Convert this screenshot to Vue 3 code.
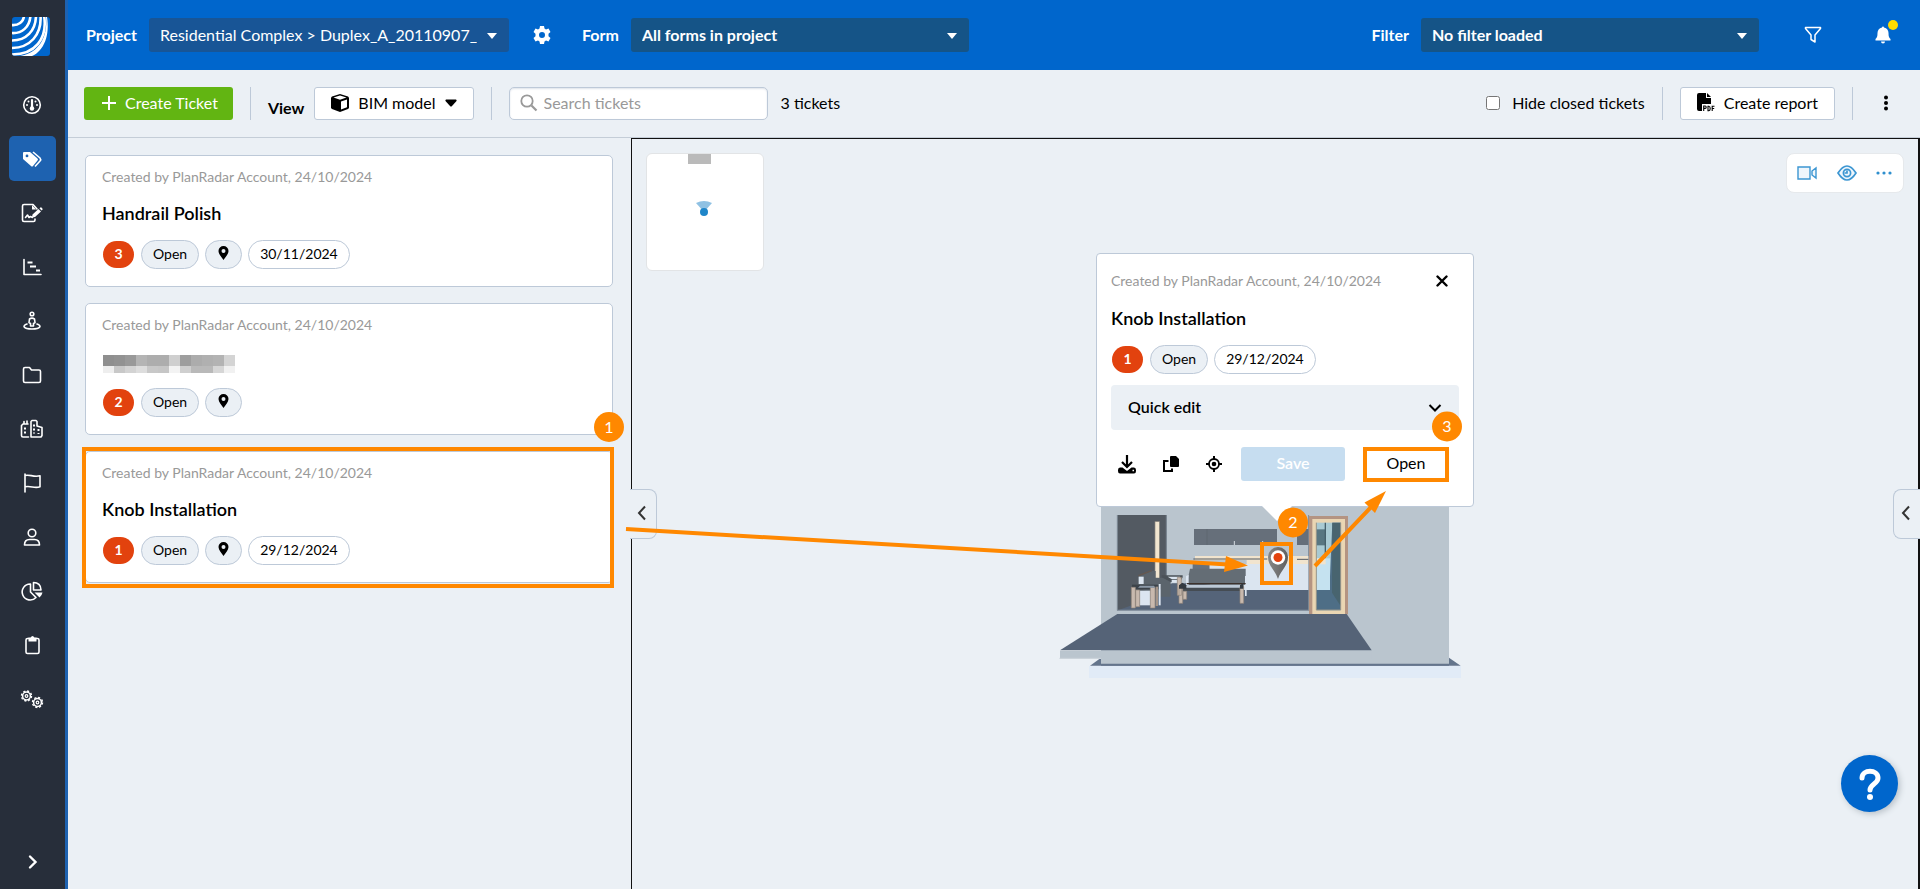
<template>
  <div class="app">
    <aside class="sidebar">
      <a class="logo" href="#" aria-label="PlanRadar">
        <svg width="38" height="39" viewBox="0 0 38 39">
          <defs><clipPath id="logoClip"><rect width="38" height="39" rx="3" /></clipPath></defs>
          <g clip-path="url(#logoClip)">
            <rect width="38" height="39" fill="#0066cc" />
            <g fill="none" stroke="#fff" stroke-width="2.6">
              <path d="M-1 8C6 9 12 5 12-2" />
              <path d="M-1 16C10 17 18 10 18.500-2" />
              <path d="M-1 23.500C14 24 24 14 24-2" />
              <path d="M-1 31C18 31 30 18 28.500-2" />
              <path d="M-1 37.500C23 38 36 22 32-2" />
            </g>
            <path d="M8 39C27 36 36 20 34 0L35 0C38 18 32 34 20 39Z" fill="#fff" />
          </g>
        </svg>
      </a>
      <nav class="menu">
        <a v-for="item in menu" :key="item.name" href="#" class="menu-item" :class="{ active: item.active }" :aria-label="item.name">
          <svg width="24" height="24" viewBox="0 0 24 24" v-html="item.icon"></svg>
        </a>
      </nav>
      <button class="expand" aria-label="Expand menu">
        <svg width="12" height="16" viewBox="0 0 12 16"><path d="M3 2.500L8.500 8L3 13.500" fill="none" stroke="#fff" stroke-width="2.400" stroke-linecap="round" /></svg>
      </button>
    </aside>

    <div class="main">
      <header class="topbar">
        <label class="top-label" for="project">Project</label>
        <div class="select project">
          <select id="project"><option>Residential Complex &gt; Duplex_A_20110907_</option></select>
          <svg class="caret" width="12" height="8" viewBox="0 0 12 8"><path d="M1 1h10L6 7z" fill="#fff" /></svg>
        </div>
        <button class="icon-btn gear" aria-label="Project settings">
          <svg width="20" height="20" viewBox="0 0 20 20">
            <path fill="#fff" fill-rule="evenodd" d="M8 1h4l.5 2.600 1.500.900 2.500-.900 2 3.400-2 1.800v2.400l2 1.800-2 3.400-2.500-.900-1.500.900L12 19H8l-.5-2.600-1.500-.900-2.500.900-2-3.400 2-1.800V8.800l-2-1.800 2-3.400 2.500.900 1.500-.900zM10 7a3 3 0 1 0 0 6 3 3 0 0 0 0-6z" />
          </svg>
        </button>
        <label class="top-label" for="form">Form</label>
        <div class="select form">
          <select id="form"><option>All forms in project</option></select>
          <svg class="caret" width="12" height="8" viewBox="0 0 12 8"><path d="M1 1h10L6 7z" fill="#fff" /></svg>
        </div>
        <label class="top-label filter-label" for="filter">Filter</label>
        <div class="select form">
          <select id="filter"><option>No filter loaded</option></select>
          <svg class="caret" width="12" height="8" viewBox="0 0 12 8"><path d="M1 1h10L6 7z" fill="#fff" /></svg>
        </div>
        <button class="icon-btn funnel" aria-label="Filter">
          <svg width="18" height="18" viewBox="0 0 18 18"><path d="M1.500 1.500h15v1L11 9v7l-4-2.500V9L1.500 2.500z" fill="none" stroke="#fff" stroke-width="1.500" stroke-linejoin="round" /></svg>
        </button>
        <button class="icon-btn bell" aria-label="Notifications">
          <svg width="16" height="18" viewBox="0 0 16 18">
            <path fill="#fff" d="M7 1.500a1 1 0 0 1 2 0c3 .5 4.500 3 4.500 5.500 0 3.500.5 4.500 2 6v1.500H.5V13c1.500-1.500 2-2.500 2-6C2.500 4.500 4 2 7 1.500zM6 15.500h4a2 2 0 0 1-4 0z" />
          </svg>
          <span class="dot"></span>
        </button>
      </header>

      <div class="toolbar">
        <button class="create">
          <svg width="14" height="14" viewBox="0 0 14 14"><path d="M7 0v14M0 7h14" stroke="#fff" stroke-width="2" /></svg>
          Create Ticket
        </button>
        <span class="divider"></span>
        <span class="view-label">View</span>
        <button class="btn bim">
          <svg width="18" height="18" viewBox="0 0 18 18">
            <path d="M9 0l8 2.500 1 1V14l-1 1-8 3-8-3-1-1V3.500l1-1z" fill="#000" />
            <path d="M2.500 3.500L9 5.700l6.500-2.200L9 1.600zM10 7.500l6-2v7.800l-6 2.300z" fill="#fff" />
          </svg>
          BIM model
          <svg width="12" height="8" viewBox="0 0 12 8"><path d="M1 .5h10q1 .5.5 1.500L7 7q-1 1-2 0L.5 2Q0 1 1 .5z" fill="#000" /></svg>
        </button>
        <span class="divider"></span>
        <div class="search">
          <svg width="18" height="18" viewBox="0 0 18 18"><circle cx="7" cy="7" r="5.700" fill="none" stroke="#999" stroke-width="1.800" /><path d="M11.500 11.500L16.500 16.500" stroke="#999" stroke-width="2.200" /></svg>
          <input v-model="query" type="text" placeholder="Search tickets" aria-label="Search tickets" />
        </div>
        <span class="count">3 tickets</span>
        <label class="hide-closed"><input v-model="hideClosed" type="checkbox" /><span>Hide closed tickets</span></label>
        <span class="divider"></span>
        <button class="btn report">
          <svg width="18" height="19" viewBox="0 0 18 19">
            <path d="M2 0h7v5h5v6H5v7H2q-2 0-2-2V2q0-2 2-2zM10 0l4 4h-4z" fill="#000" />
            <path d="M6.700 18v-5h1.500q1 0 1 1.200t-1 1.200H6.700M11 13.200v4.600h.8q1.400-.3 1.400-2.300t-1.400-2.300zM15.200 18v-4.800h2.300M15.200 15.500h2" fill="none" stroke="#000" stroke-width="1.100" />
          </svg>
          Create report
        </button>
        <span class="divider"></span>
        <button class="icon-btn more" aria-label="More">
          <svg width="6" height="16" viewBox="0 0 6 16"><circle cx="3" cy="2.500" r="2" /><circle cx="3" cy="8" r="2" /><circle cx="3" cy="13.500" r="2" /></svg>
        </button>
      </div>

      <div class="content">
        <section class="list">
          <article v-for="t in tickets" :key="t.id" class="card">
            <p class="meta">Created by PlanRadar Account, 24/10/2024</p>
            <h3 v-if="t.title" class="title">{{ t.title }}</h3>
            <div v-else class="title redacted">
              <svg width="132" height="18" viewBox="0 0 132 18" shape-rendering="crispEdges">
                <rect v-for="(c, i) in mosaicTop" :key="'t' + i" :x="i * 11" y="0" width="11" height="11" :fill="c" />
                <rect v-for="(c, i) in mosaicBottom" :key="'b' + i" :x="i * 11" y="11" width="11" height="7" :fill="c" />
              </svg>
            </div>
            <div class="chips">
              <span class="number">{{ t.id }}</span>
              <span class="chip grey">Open</span>
              <span class="chip grey pin">
                <svg width="11" height="14" viewBox="0 0 11 14"><path fill-rule="evenodd" d="M5.500 0A5 5 0 0 1 10.500 5c0 3-3 6-5 9-2-3-5-6-5-9a5 5 0 0 1 5-5zm0 3a2 2 0 1 0 0 4 2 2 0 0 0 0-4z" /></svg>
              </span>
              <span v-if="t.date" class="chip">{{ t.date }}</span>
            </div>
            <template v-if="t.marked">
              <span class="mark"></span>
              <span class="step">1</span>
            </template>
          </article>
        </section>

        <section class="viewer">
          <button class="tab tab-left" aria-label="Collapse list">
            <svg width="10" height="16" viewBox="0 0 10 16"><path d="M8 1.500L2 8l6 6.500" fill="none" stroke="#333" stroke-width="2" /></svg>
          </button>
          <button class="tab tab-right" aria-label="Open panel">
            <svg width="10" height="16" viewBox="0 0 10 16"><path d="M8 1.500L2 8l6 6.500" fill="none" stroke="#333" stroke-width="2" /></svg>
          </button>

          <div class="minimap">
            <svg width="116" height="116" viewBox="0 0 116 116">
              <rect x="41" y="0" width="23" height="10" fill="#bababa" />
              <path d="M49 49q8-4 16 0l-8 9z" fill="#8fc1e3" />
              <circle cx="57" cy="58" r="4" fill="#1f86c9" />
            </svg>
          </div>

          <div class="viewer-tools">
            <button class="icon-btn" aria-label="Camera">
              <svg width="20" height="14" viewBox="0 0 20 14" fill="#eff6fc" stroke="#3c96d2" stroke-width="1.400"><path d="M1 1h12v12H1zM15 5l4-3v10l-4-3z" /></svg>
            </button>
            <button class="icon-btn" aria-label="Visibility">
              <svg width="20" height="16" viewBox="0 0 20 16" fill="none" stroke="#3c96d2" stroke-width="1.700"><path d="M1 8Q10-6 19 8 10 22 1 8z" fill="#eff6fc" /><circle cx="10" cy="8" r="3.600" /><path d="M10 5.500V8H7.500" /></svg>
            </button>
            <button class="icon-btn" aria-label="More tools">
              <svg width="16" height="4" viewBox="0 0 16 4" fill="#2f8fce"><circle cx="2" cy="2" r="1.600" /><circle cx="8" cy="2" r="1.600" /><circle cx="14" cy="2" r="1.600" /></svg>
            </button>
          </div>

          <div class="scene">
            <article class="popup">
              <div class="popup-head">
                <p class="meta">Created by PlanRadar Account, 24/10/2024</p>
                <button class="icon-btn" aria-label="Close">
                  <svg width="12" height="12" viewBox="0 0 12 12"><path d="M1.500 1.500l9 9M10.500 1.500l-9 9" stroke="#000" stroke-width="2.400" stroke-linecap="round" /></svg>
                </button>
              </div>
              <h3 class="title">Knob Installation</h3>
              <div class="chips">
                <span class="number">1</span>
                <span class="chip grey">Open</span>
                <span class="chip">29/12/2024</span>
              </div>
              <button class="quick">
                <span>Quick edit</span>
                <svg width="14" height="10" viewBox="0 0 14 10"><path d="M1.500 2L7 7.500 12.500 2" fill="none" stroke="#000" stroke-width="2" /></svg>
              </button>
              <div class="actions">
                <button class="icon-btn" aria-label="Download">
                  <svg width="18" height="19" viewBox="0 0 18 19">
                    <path d="M9 0v11M4 7l5 5 5-5" fill="none" stroke="#000" stroke-width="2.200" />
                    <path fill-rule="evenodd" d="M2 12.500h2.500L9 16l4.500-3.500H16q2 0 2 2.500v1q0 2.500-2 2.500H2q-2 0-2-2.500v-1q0-2.500 2-2.500zm12.500 2.300v1.500H16v-1.500z" />
                  </svg>
                </button>
                <button class="icon-btn" aria-label="Copy">
                  <svg width="16" height="16" viewBox="0 0 16 16"><path d="M8 0h5l3 3v7q0 1-1 1H8q-1 0-1-1V1q0-1 1-1z" /><path d="M5.500 5H1v10h8v-2.500" fill="none" stroke="#000" stroke-width="2" /></svg>
                </button>
                <button class="icon-btn" aria-label="Locate">
                  <svg width="16" height="16" viewBox="0 0 16 16"><circle cx="8" cy="8" r="5" fill="none" stroke="#000" stroke-width="1.800" /><circle cx="8" cy="8" r="2.300" /><path d="M8 0v3M8 13v3M0 8h3M13 8h3" stroke="#000" stroke-width="2" /></svg>
                </button>
                <button class="save" disabled>Save</button>
                <button class="open">Open</button>
              </div>
            </article>

            <svg class="building" width="460" height="200" viewBox="0 0 1380 600">
              <path d="M150 527l33-24h1044l35 24z" fill="#64758c" />
              <rect x="147" y="528" width="1116" height="36" fill="#e1ebf7" />
              <rect x="183" y="30" width="1044" height="492" fill="#bac5ce" />
              <!-- room interior -->
              <rect x="232" y="75" width="148" height="287" fill="#535a62" />
              <path d="M379 75v190M232 75v286" stroke="#7c8894" stroke-width="3" />
              <rect x="345" y="95" width="13" height="170" fill="#f2e6d0" stroke="#8f8a80" stroke-width="2" />
              <path d="M236 360l35-13 125-67h80l140 20h190v61z" fill="#556479" />
              <rect x="462" y="117" width="249" height="48" fill="#666f7a" />
              <path d="M501 117v48" stroke="#5b646e" stroke-width="2" />
              <path d="M583 153v12M668 153v12" stroke="#d6dde3" stroke-width="3" />
              <rect x="771" y="117" width="36" height="48" fill="#666f7a" />
              <path d="M806 75v286" stroke="#7c8894" stroke-width="3" />
              <path d="M465 198h340v24H620v-12H465z" fill="#f1e4ce" />
              <path d="M460 207h222M771 208h34" stroke="#535a62" stroke-width="3" />
              <rect x="510" y="222" width="295" height="78" fill="#dbe5f0" />
              <rect x="458" y="222" width="50" height="18" fill="#67717c" />
              <!-- armchair -->
              <path d="M295 260l40-17h12v20l45 1v56h-45l-52-30z" fill="#5b646c" />
              <path d="M296 260h15v22h-15z" fill="#dbe5f0" />
              <path d="M295 257l40-15" stroke="#665950" stroke-width="4" />
              <path d="M365 256h63v6l-8 14h-28l-27-14z" fill="#4b5259" />
              <path d="M383 260h37v8h-24zM395 270h18v8h-18z" fill="#dbe5f0" />
              <path d="M276 284h86v14h-86z" fill="#3c434a" />
              <path d="M298 302h34v44h-34z" fill="#dbe5f0" />
              <path d="M274 292h12v62h-12zM287 300h12v50h-12zM331 292h14v62h-14z" fill="#c8b9ae" stroke="#93857a" stroke-width="2" />
              <path d="M347 290h7v58h-7z" fill="#a39488" />
              <path d="M356 282h6v64h-6z" fill="#dbe5f0" />
              <path d="M300 287h42l4 6h-52z" fill="#8b99a8" />
              <!-- sofa -->
              <path d="M450 236h167v48H440z" fill="#646d75" />
              <path d="M438 258l8-3v30h-8zM615 258h5v60h-5z" fill="#dbe5f0" />
              <path d="M440 281h177" stroke="#3c322d" stroke-width="4" />
              <path d="M425 285h185v18H425z" fill="#454c53" />
              <path d="M440 285h167v8H435z" fill="#bcc9d6" />
              <path d="M412 262h12v54h-12zM417 290h11v50h-11zM429 304h11v24h-11zM600 290h11v50h-11z" fill="#c8b9ae" stroke="#93857a" stroke-width="2" />
              <path d="M417 286l10-8 12 8v10h-22zM600 286l10-8v18h-10z" fill="#343a41" />
              <path d="M232 361h575" stroke="#8793a1" stroke-width="4" />
              <!-- door -->
              <rect x="807" y="78" width="117" height="295" fill="#b49482" />
              <path d="M817 87h98v285h-98z" fill="#ead6b3" />
              <rect x="829" y="98" width="73" height="263" fill="#a9cad3" />
              <path d="M829 118h28v48h-28z" fill="#587681" />
              <path d="M856 98v108" stroke="#46616c" stroke-width="4" />
              <path d="M829 205h42v95h-42z" fill="#c5e2f0" />
              <path d="M829 205h28v18h-28z" fill="#f1e4ce" />
              <path d="M829 300h41v-40l7-162h25v262h-73z" fill="#4e6e86" />
              <path d="M877 98h25v250l-26-40z" fill="#48646f" />
              <path d="M829 98v262h73V98" fill="none" stroke="#97958a" stroke-width="3" />
              <!-- terrace -->
              <path d="M60 483h935v24H183v0H60z" fill="#bac5ce" />
              <path d="M58 505h125" stroke="#cfd7dd" stroke-width="3" />
              <path d="M232 372h688l75 109H60z" fill="#556377" />
              <path d="M183 524h1044" stroke="#64758c" stroke-width="6" />
            </svg>

            <svg class="guides" width="470" height="440" viewBox="1040 253 470 440">
              <defs>
                <linearGradient id="pinFill" x1="0" x2="1">
                  <stop offset="0" stop-color="#868686" />
                  <stop offset="1" stop-color="#5f5f5f" />
                </linearGradient>
              </defs>
              <path d="M1278 579c-3-9-10-13-10-22a10 10 0 0 1 20 0c0 9-7 13-10 22z" fill="url(#pinFill)" />
              <circle cx="1278" cy="557.500" r="7.200" fill="#fff" />
              <circle cx="1278" cy="557.500" r="4.500" fill="#e2420e" />
              <g fill="none" stroke="#ff8800" stroke-width="4">
                <rect x="1262" y="544" width="29" height="39" />
                <rect x="1365" y="449" width="82" height="31" />
                <path d="M626 529L1228 564.500M1315 566L1374 504" />
              </g>
              <path d="M1248 565.500l-24 6.500 2-16zM1386 491l-11 22-10.500-10.500z" fill="#ff8800" />
              <circle cx="1293" cy="522.500" r="15" fill="#ff8800" />
              <circle cx="1447" cy="426.500" r="15" fill="#ff8800" />
              <text x="1293" y="528" text-anchor="middle">2</text>
              <text x="1447" y="432" text-anchor="middle">3</text>
            </svg>
          </div>

          <button class="help" aria-label="Help">
            <svg width="24" height="32" viewBox="0 0 24 32"><path d="M4 10c0-9 16-9 16 0 0 6-8 6-8 12" fill="none" stroke="#fff" stroke-width="5" stroke-linecap="round" /><circle cx="12" cy="29" r="3" fill="#fff" /></svg>
          </button>
        </section>
      </div>
    </div>
  </div>
</template>

<script setup>
import { ref } from 'vue'

const query = ref('')
const hideClosed = ref(false)

const tickets = [
  { id: 3, title: 'Handrail Polish', date: '30/11/2024' },
  { id: 2, title: '', date: '' },
  { id: 1, title: 'Knob Installation', date: '29/12/2024', marked: true }
]

const mosaicTop = ['#8f8f8f', '#929292', '#999', '#b4b4b4', '#adadad', '#adadad', '#cfcfcf', '#9e9e9e', '#acacac', '#b0b0b0', '#b3b3b3', '#d4d4d4']
const mosaicBottom = ['#eee', '#c8c8c8', '#d3d3d3', '#ddd', '#c8c8c8', '#c6c6c6', '#f3f3f3', '#cfcfcf', '#b9b9b9', '#b9b9b9', '#d6d6d6', '#f1f1f1']

const line = 'fill="none" stroke="#fff" stroke-width="1.6" stroke-linejoin="round" stroke-linecap="round"'

// small cog: ring, teeth and hub
const cog = '<circle r="3.9" fill="none" stroke="#fff" stroke-width="1.5"/><circle r="5" fill="none" stroke="#fff" stroke-width="1.4" stroke-dasharray="2.1 1.827"/><circle r="1.3" fill="none" stroke="#fff" stroke-width="1.2"/>'

const menu = [
  {
    name: 'Dashboard',
    icon: `<g ${line}><circle cx="12" cy="12" r="8.300"/><path d="M12 7v8" stroke-width="2.200"/></g><g fill="#fff"><circle cx="12" cy="15.500" r="2.200"/><circle cx="8.500" cy="8.500" r="1"/><circle cx="15.500" cy="8.500" r="1"/><circle cx="7" cy="12" r="1"/><circle cx="17" cy="12" r="1"/></g>`
  },
  {
    name: 'Tickets',
    active: true,
    icon: '<path fill="#fff" fill-rule="evenodd" d="M3 6q0-1 1-1h6l7.500 6.500q1 1 0 2L13 19q-1 1-2 0L3 12zM7 7.500a1.400 1.400 0 1 0 0 2.800 1.400 1.400 0 0 0 0-2.800z"/><path d="M13 5l7 6q1.300 1.500 0 3L15 19.500" fill="none" stroke="#fff" stroke-width="1.600"/>'
  },
  {
    name: 'Forms',
    icon: `<path ${line} d="M17 8l-4-4.500H4q-1.500 0-1.500 1.500v14q0 1.500 1.500 1.500h9.500q1.500 0 1.500-1.500v-1M5.500 16.500l2-2.500 1.500 2.500 1.500-1 2 1"/><path d="M12 4v4.500h4zM12.500 13.500l6-5.500 2.500 2.500-6 5.500-3 .5zM19.500 7.200l1.300-1q1 0 2 2l-1.300 1.300z" fill="#fff"/>`
  },
  { name: 'Schedule', icon: `<path ${line} d="M4 4.500V19.500h17"/><path d="M7.500 7.500h5M10 11.500h6M16 15.500h4" stroke="#fff" stroke-width="2"/>` },
  { name: 'SiteView', icon: `<g ${line}><circle cx="12" cy="5" r="1.800"/><path d="M9.500 10q2.500-1.800 5 0l.5 3.500-1.500 1v2.500h-3v-2.500l-1.500-1z"/><path d="M7 15c-5 1.500-4 5 5 5s10-3.500 5-5"/></g>` },
  { name: 'Files', icon: `<path ${line} d="M3.500 6q0-1.500 1.500-1.500h4.500l2 2.500H19q1.500 0 1.500 1.500V18q0 1.500-1.500 1.500H5q-1.500 0-1.500-1.500z"/>` },
  { name: 'Projects', icon: `<path ${line} d="M8.500 20H3q-1.500 0-1.500-1.500V8.500L3 7h5M4 7V4.500M7 7V4M11 20V4.500l1-1h4l1 1V9l5 1.500v8L21 20z"/><path d="M5 10.500v7M14 7.500v9M18.500 12v5" stroke="#fff" stroke-width="2" stroke-dasharray="2 2"/>` },
  { name: 'Flags', icon: `<path ${line} d="M5 3v18M5 4.500c5-1.500 8 2 15 .3v11c-6 2-9-1.500-15 0"/>` },
  { name: 'Contacts', icon: `<g ${line}><circle cx="12" cy="8" r="3.800"/><path d="M4.500 20q0-5.500 5-5.500h5q5 0 5 5.500z"/></g>` },
  { name: 'Statistics', icon: `<path ${line} d="M10.500 5a8 8 0 1 0 5.500 13.500l-5.500-5.500zM13.500 3.500v7.500H21c0-5-3-7.500-7.500-7.500z"/><path d="M14.500 13.500h8q-.5 3-3 5z" fill="#fff"/>` },
  { name: 'Plans', icon: `<path ${line} d="M9 5.500H7.500q-1.500 0-1.500 1.500v12q0 1.500 1.500 1.500h10q1.500 0 1.500-1.500V7q0-1.500-1.500-1.500H16"/><path d="M8.500 4.500h2q2-3 4 0h2v4h-8z" fill="#fff"/>` },
  { name: 'Settings', icon: `<g transform="translate(6.500 9)">${cog}</g><g transform="translate(17.500 15.500)">${cog}</g>` }
]
</script>

<style>
body {
  margin: 0;
}
</style>

<style scoped>
.app {
  display: flex;
  min-height: 100vh;
  background: #ebf0f5;
  color: #000;
  font-family: Lato, "Liberation Sans", sans-serif;
  font-size: 16px;
}
.app * {
  box-sizing: border-box;
}
button,
input,
select {
  font: inherit;
  color: inherit;
}
button {
  cursor: pointer;
}
svg {
  display: block;
  flex: none;
}
p,
h3 {
  margin: 0;
}

/* sidebar */
.sidebar {
  display: flex;
  flex-direction: column;
  align-items: center;
  flex: none;
  width: 68px;
  padding: 17px 0 19px;
  border-right: 3px solid #1e62b0;
  background: #272e3a;
}
.logo {
  margin-right: 3px;
}
.menu {
  display: flex;
  flex-direction: column;
  gap: 9px;
  margin-top: 26px;
}
.menu-item {
  display: flex;
  align-items: center;
  justify-content: center;
  width: 47px;
  height: 45px;
  padding-right: 2px;
  border-radius: 5px;
}
.menu-item.active {
  background: #1e62b0;
}
.expand {
  margin-top: auto;
  padding: 0;
  border: 0;
  background: none;
}

/* top bar */
.main {
  display: flex;
  flex-direction: column;
  flex: 1;
  min-width: 0;
}
.topbar {
  display: flex;
  align-items: center;
  height: 70px;
  padding: 0 29px 0 18px;
  background: #0066cc;
  color: #fff;
}
.top-label {
  margin-right: 12px;
  padding-bottom: 2px;
  font-weight: 700;
}
.select {
  position: relative;
  height: 34px;
  border-radius: 3px;
  background: #155487;
  font-weight: 700;
}
.select select {
  width: 100%;
  height: 34px;
  padding: 0 32px 2px 11px;
  border: 0;
  background: none;
  appearance: none;
}
.caret {
  position: absolute;
  top: 14px;
  right: 11px;
  pointer-events: none;
}
.project {
  width: 360px;
  background: #185596;
  font-weight: 400;
}
.form {
  width: 338px;
}
.icon-btn {
  display: flex;
  padding: 0;
  border: 0;
  background: none;
}
.gear {
  margin: 0 30px 0 23px;
}
.filter-label {
  margin-left: auto;
}
.funnel {
  margin-left: 45px;
}
.bell {
  position: relative;
  margin-left: 53px;
}
.dot {
  position: absolute;
  top: -6px;
  right: -7px;
  width: 10px;
  height: 10px;
  border-radius: 50%;
  background: #ffdc00;
}

/* toolbar */
.toolbar {
  display: flex;
  align-items: center;
  height: 68px;
  padding: 0 31px 1px 16px;
  border-bottom: 1px solid #c4cdd7;
}
.create {
  display: flex;
  align-items: center;
  gap: 9px;
  height: 33px;
  padding: 0 15px 1px 18px;
  border: 0;
  border-radius: 3px;
  background: #62b512;
  color: #fff;
}
.divider {
  width: 1px;
  height: 33px;
  margin: 0 17px;
  background: #bdc9d8;
}
.view-label {
  margin: 8px 10px 0 0;
  font-weight: 700;
}
.btn {
  display: flex;
  align-items: center;
  gap: 9px;
  height: 33px;
  padding: 0 16px 1px;
  border: 1px solid #bdc9d8;
  border-radius: 3px;
  background: #fff;
}
.search {
  display: flex;
  align-items: center;
  gap: 6px;
  width: 259px;
  height: 33px;
  padding: 0 10px;
  border: 1px solid #bdc9d8;
  border-radius: 5px;
  background: #fff;
  box-shadow: inset 0 1px 2px #dde3ea;
}
.search input {
  flex: 1;
  min-width: 0;
  padding: 0 0 2px;
  border: 0;
  outline: 0;
  background: none;
}
.search input::placeholder {
  color: #999;
}
.count {
  margin-left: 13px;
  padding-bottom: 2px;
}
.hide-closed {
  display: flex;
  align-items: center;
  gap: 12px;
  margin-left: auto;
}
.hide-closed input {
  width: 14px;
  height: 14px;
  margin: 0;
}
.hide-closed span {
  padding-bottom: 2px;
}
.more {
  margin-left: 13px;
}

/* ticket list */
.content {
  display: flex;
  flex: 1;
}
.list {
  display: flex;
  flex-direction: column;
  flex: none;
  gap: 16px;
  width: 563px;
  padding: 17px 18px 0 17px;
}
.card {
  position: relative;
  padding: 11px 16px 17px;
  border: 1px solid #bdc9d8;
  border-radius: 5px;
  background: #fff;
}
.meta {
  color: #999;
  font-size: 14px;
  line-height: 20px;
}
.title {
  height: 24px;
  margin: 14px 0 15px;
  font-size: 18px;
  font-weight: 600;
  line-height: 24px;
}
.redacted {
  padding: 6px 0 0 1px;
}
.chips {
  display: flex;
  align-items: center;
  gap: 6px;
  height: 29px;
}
.number {
  width: 31px;
  height: 27px;
  margin: 0 1px;
  border-radius: 14px;
  background: #e2420e;
  color: #fff;
  font-size: 14px;
  font-weight: 700;
  line-height: 25px;
  text-align: center;
}
.chip {
  height: 29px;
  padding: 0 11px;
  border: 1px solid #bdc9d8;
  border-radius: 15px;
  font-size: 14px;
  line-height: 25px;
}
.grey {
  background: #ebf0f5;
}
.pin {
  padding: 5px 12px 0;
}
.mark {
  position: absolute;
  inset: -5px -2px -6px -4px;
  border: 4px solid #ff8800;
}
.step {
  position: absolute;
  top: -40px;
  right: -12px;
  width: 30px;
  height: 30px;
  border-radius: 50%;
  background: #ff8800;
  color: #fff;
  line-height: 30px;
  text-align: center;
}

/* viewer */
.viewer {
  position: relative;
  flex: 1;
  padding-top: 114px;
  border: solid #111;
  border-width: 1px 2px 0 1px;
}
.tab {
  position: absolute;
  top: 350px;
  display: flex;
  align-items: center;
  justify-content: center;
  width: 27px;
  height: 50px;
  padding: 0 2px 2px 0;
  border: 1px solid #bdc9d8;
  background: #ebf0f5;
}
.tab-left {
  left: -2px;
  border-left: 0;
  border-radius: 0 8px 8px 0;
}
.tab-right {
  right: -2px;
  border-right: 0;
  border-radius: 8px 0 0 8px;
}
.minimap {
  position: absolute;
  top: 14px;
  left: 14px;
  border: 1px solid #e2e4e6;
  border-radius: 6px;
  background: #fff;
}
.viewer-tools {
  position: absolute;
  top: 14px;
  right: 14px;
  display: flex;
  align-items: center;
  justify-content: space-between;
  width: 118px;
  height: 40px;
  padding: 0 11px 0 10px;
  border: 1px solid #e6e9ec;
  border-radius: 8px;
  background: #fff;
}
.scene {
  position: relative;
  width: 470px;
  margin: 0 auto;
}
.popup {
  position: relative;
  z-index: 1;
  width: 378px;
  margin-left: 56px;
  padding: 17px 14px 25px;
  border: 1px solid #bdc9d8;
  border-radius: 4px;
  background: #fff;
}
.popup::after {
  content: "";
  position: absolute;
  bottom: -15px;
  left: 165px;
  border: 15px solid transparent;
  border-top-color: #fff;
  border-bottom: 0;
}
.popup-head {
  display: flex;
  align-items: center;
  justify-content: space-between;
  padding-right: 11px;
}
.popup .title {
  margin-top: 15px;
}
.quick {
  display: flex;
  align-items: center;
  justify-content: space-between;
  width: 100%;
  height: 45px;
  margin: 11px 0 17px;
  padding: 0 17px;
  border: 0;
  border-radius: 4px;
  background: #ebf0f5;
  font-weight: 600;
}
.quick span {
  padding-bottom: 2px;
}
.actions {
  display: flex;
  align-items: center;
  gap: 27px;
  height: 34px;
  padding-left: 7px;
}
.save,
.open {
  height: 34px;
  padding: 0 0 3px;
  border: 0;
  border-radius: 3px;
}
.save {
  width: 104px;
  margin-left: -8px;
  background: #c6ddf0;
  color: #fff;
  font-weight: 600;
}
.open {
  width: 86px;
  margin-left: -9px;
  background: #fff;
}
.building {
  margin-top: -17px;
}
.guides {
  position: absolute;
  top: 0;
  left: 0;
  z-index: 2;
  overflow: visible;
  pointer-events: none;
}
.guides text {
  fill: #fff;
  font-size: 16px;
}
.help {
  position: absolute;
  right: 20px;
  bottom: 77px;
  display: flex;
  align-items: center;
  justify-content: center;
  width: 57px;
  height: 57px;
  padding: 0;
  border: 0;
  border-radius: 50%;
  background: #0066cc;
  box-shadow: 2px 2px 6px #b8c0c8;
}
</style>
